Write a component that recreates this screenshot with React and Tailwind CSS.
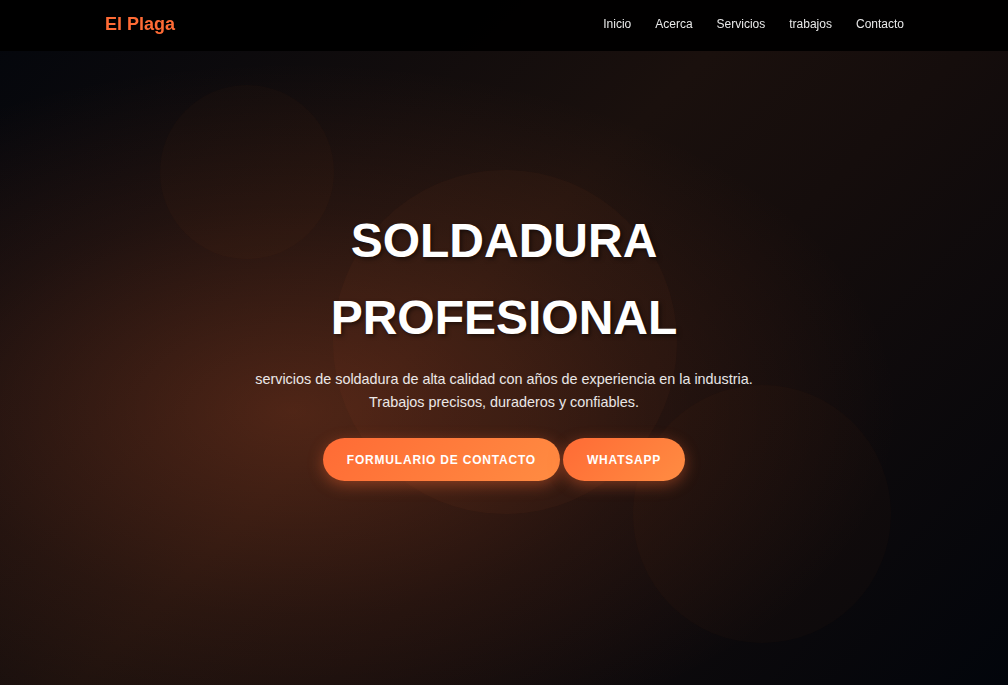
export default function App() {
  const links = ["Inicio", "Acerca", "Servicios", "trabajos", "Contacto"];

  return (
    <div className="relative min-h-screen overflow-hidden font-['Liberation_Sans',Arial,sans-serif] text-white">
      <nav className="fixed top-0 left-0 right-0 z-20 h-[51px] bg-black/95 pb-[3px]">
        <div className="mx-auto flex h-full max-w-[800px] items-center justify-between pl-px">
          <span className="text-[18px] font-bold text-[#ff6b35]">El Plaga</span>
          <ul className="flex gap-6 text-[12px] text-[#e8e8e8]">
            {links.map((link) => (
              <li key={link}>
                <a href="#">{link}</a>
              </li>
            ))}
          </ul>
        </div>
      </nav>

      <section className="relative flex h-[685px] items-center justify-center bg-[radial-gradient(ellipse_at_29%_60%,rgba(255,107,53,0.24)_0%,rgba(255,107,53,0.08)_35%,transparent_60%),linear-gradient(135deg,#03060c_0%,#1a100d_45%,#150d0c_60%,#02050b_100%)]">
        {/* decorative circles */}
        <div className="absolute left-[160px] top-[85px] h-[174px] w-[174px] rounded-full bg-[#ff6b35]/[0.025]" />
        <div className="absolute left-[333px] top-[170px] h-[344px] w-[344px] rounded-full bg-[#ff6b35]/[0.035]" />
        <div className="absolute left-[633px] top-[385px] h-[258px] w-[258px] rounded-full bg-[#ff6b35]/[0.025]" />

        <div className="relative z-10 flex flex-col items-center text-center -mt-[2px]">
          <h1 className="text-[48px] font-bold leading-[77px] [text-shadow:2px_2px_4px_rgba(0,0,0,0.5)]">
            SOLDADURA
            <br />
            PROFESIONAL
          </h1>
          <p className="mt-3 text-[14.4px] leading-[23px] text-white/90">
            servicios de soldadura de alta calidad con años de experiencia en la industria.
            <br />
            Trabajos precisos, duraderos y confiables.
          </p>
          <div className="mt-6 flex gap-[3px]">
            <button className="h-[43px] rounded-full bg-[linear-gradient(135deg,#ff6b35,#ff8c42)] px-6 text-[12px] font-bold tracking-[0.8px] text-white shadow-[0_4px_15px_rgba(255,107,53,0.4)]">
              FORMULARIO DE CONTACTO
            </button>
            <button className="h-[43px] rounded-full bg-[linear-gradient(135deg,#ff6b35,#ff8c42)] px-6 text-[12px] font-bold tracking-[0.8px] text-white shadow-[0_4px_15px_rgba(255,107,53,0.4)]">
              WHATSAPP
            </button>
          </div>
        </div>
      </section>
    </div>
  );
}
